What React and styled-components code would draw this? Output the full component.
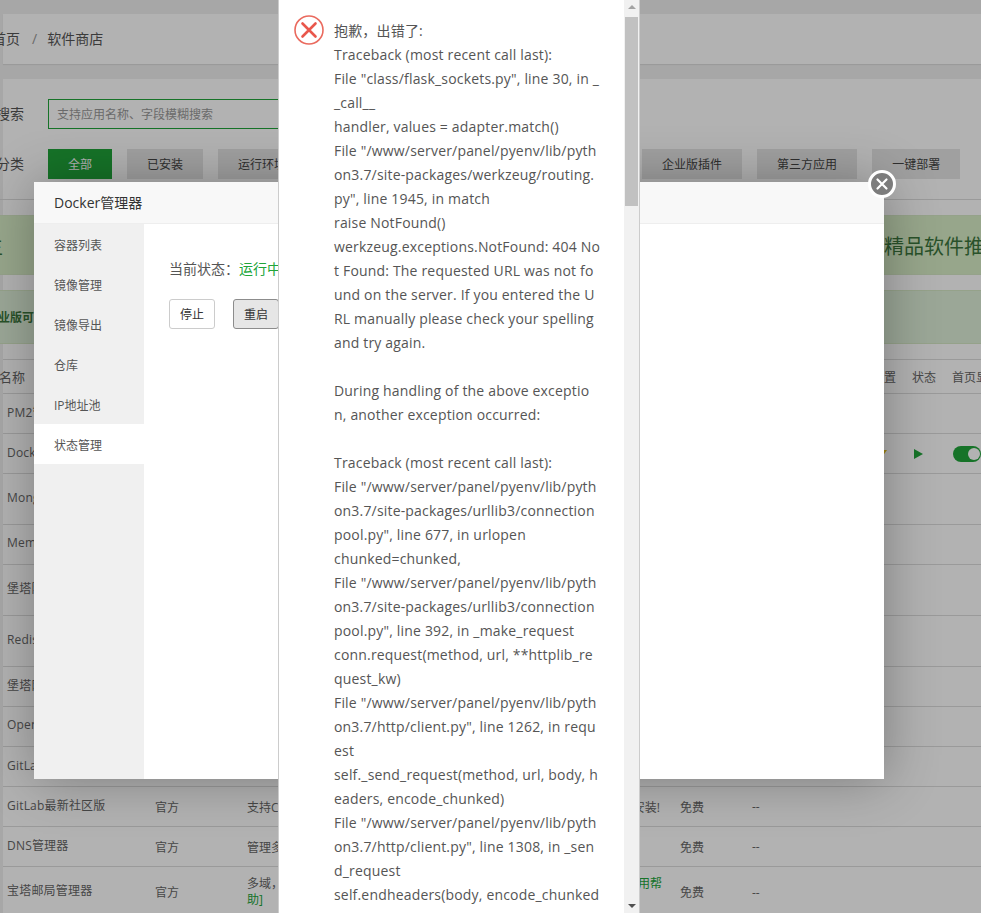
import React from "react";
import styled, { createGlobalStyle } from "styled-components";

const FONT = `"Open Sans", "Noto Sans CJK SC", sans-serif`;

const GlobalStyle = createGlobalStyle`
    html, body {
        margin: 0;
        padding: 0;
        height: 100%;
        overflow: hidden;
    }
    body {
        font-family: ${FONT};
        font-size: 12px;
        color: #666;
        background: #f0f0f0;
    }
    * {
        box-sizing: border-box;
    }
`;

const Viewport = styled.div`
    position: relative;
    width: 981px;
    height: 913px;
    overflow: hidden;
`;

const Page = styled.div`
    display: flex;
    flex-direction: column;
    gap: 15px;
    padding: 14px 0 0 3px;
    width: 1200px;
`;

const Crumbs = styled.div`
    display: flex;
    align-items: center;
    gap: 10px;
    height: 50px;
    padding-bottom: 2px;
    background: #fff;
    font-size: 14px;
    color: #555;
    box-shadow: 0 1px 1px rgba(0, 0, 0, 0.08);

    i {
        font-style: normal;
        color: #999;
    }
`;

const CrumbFirst = styled.span`
    margin: 0 2px 0 -11px;
`;

const Panel = styled.div`
    background: #fff;
    padding-top: 20px;
`;

const FormRow = styled.div`
    display: flex;
    align-items: center;
    height: 30px;
    margin-bottom: 20px;
`;

const RowLabel = styled.div`
    display: flex;
    justify-content: flex-end;
    width: 21px;
    margin-right: 24px;
    padding-bottom: 2px;
    font-size: 14px;
    color: #555;
    white-space: nowrap;
`;

const SearchInput = styled.div`
    width: 500px;
    height: 30px;
    padding-left: 8px;
    line-height: 30px;
    border: 1px solid #20a53a;
    font-size: 12px;
    color: #999;
`;

const Tabs = styled.div`
    display: flex;
    gap: 15px;
`;

const Tab = styled.div`
    padding: 0 20px;
    height: 30px;
    line-height: 32px;
    font-size: 12px;
    background: ${(p) => (p.$active ? "#20a53a" : "#e6e6e6")};
    color: ${(p) => (p.$active ? "#fff" : "#444")};
`;

const Rule = styled.div`
    height: 1px;
    margin-left: -3px;
    background: #ddd;
`;

const Band = styled.div`
    display: flex;
    align-items: center;
    height: ${(p) => p.$h}px;
    margin: ${(p) => p.$mt}px 0 0 -3px;
    background: ${(p) => p.$bg};
    border: 1px solid #d6e9c6;
    border-width: 1px 0;
    color: #3c763d;
    white-space: nowrap;
`;

const BandClip = styled.div`
    display: flex;
    justify-content: flex-end;
    width: ${(p) => p.$w}px;
    font-size: ${(p) => p.$size}px;
    font-weight: ${(p) => p.$weight};
`;

const BandRight = styled.div`
    margin-left: 881px;
    font-size: 20px;
`;

const Table = styled.div`
    margin-top: 15px;
    border-top: 1px solid #ddd;
`;

const Row = styled.div`
    display: grid;
    grid-template-columns: 148px 92px 433px 72px 133px 27px 40px 1fr;
    align-items: center;
    height: ${(p) => p.$h}px;
    padding-left: 4px;
    border-bottom: 1px solid #ddd;
    font-size: 12px;
    color: #666;
    white-space: nowrap;
`;

const Name = styled.div`
    padding-bottom: 4px;
    font-size: 12px;
    letter-spacing: 0.2px;
    color: #666;
`;

const HeaderName = styled.div`
    margin-left: -34px;
    font-size: 13px;
`;

const DescCell = styled.div`
    display: flex;
    justify-content: space-between;
    width: ${(p) => p.$w}px;
`;

const MailDesc = styled.div`
    line-height: 16px;
`;

const Green = styled.span`
    color: #20a53a;
`;

const SetCell = styled.div`
    display: flex;
    justify-content: flex-end;
    margin-right: -11px;
`;

const Play = styled.div`
    width: 0;
    height: 0;
    margin-left: 2px;
    border-style: solid;
    border-width: 5.5px 0 5.5px 9px;
    border-color: transparent transparent transparent #20a53a;
`;

const WarnMark = styled.div`
    width: 0;
    height: 0;
    margin-left: -8px;
    border-style: solid;
    border-width: 7px 5px 0 5px;
    border-color: #e6c020 transparent transparent transparent;
`;

const Toggle = styled.div`
    position: relative;
    width: 28px;
    height: 16px;
    margin-left: 1px;
    border-radius: 8px;
    background: #20a53a;

    &::after {
        content: "";
        position: absolute;
        top: 2px;
        right: 1px;
        width: 12px;
        height: 12px;
        border-radius: 50%;
        background: #fff;
    }
`;

const Shade = styled.div`
    position: absolute;
    inset: 0;
    background: rgba(0, 0, 0, 0.3);
`;

const Dialog = styled.div`
    position: absolute;
    left: 34px;
    top: 182px;
    width: 850px;
    height: 597px;
    display: flex;
    flex-direction: column;
    background: #fff;
    box-shadow: 1px 1px 50px rgba(0, 0, 0, 0.3);
`;

const DialogTitle = styled.div`
    height: 42px;
    padding-left: 20px;
    line-height: 41px;
    font-size: 14px;
    color: #333;
    background: #f8f8f8;
    border-bottom: 1px solid #eee;
`;

const DialogBody = styled.div`
    flex: 1;
    display: flex;
`;

const SideNav = styled.div`
    width: 110px;
    background: #f0f0f0;
`;

const NavItem = styled.div`
    height: 40px;
    padding-left: 20px;
    line-height: 44px;
    font-size: 12px;
    color: #555;
    background: ${(p) => (p.$active ? "#fff" : "transparent")};
`;

const StatusPane = styled.div`
    padding: 34px 25px;
    font-size: 14px;
    color: #555;
`;

const StatusLine = styled.div`
    height: 22px;
    line-height: 22px;
`;

const StatusButtons = styled.div`
    display: flex;
    gap: 18px;
    margin-top: 19px;
`;

const StatusBtn = styled.div`
    width: 46px;
    height: 30px;
    line-height: 30px;
    text-align: center;
    font-size: 12px;
    border-radius: 3px;
    border: 1px solid ${(p) => (p.$pressed ? "#8c8c8c" : "#ccc")};
    background: ${(p) => (p.$pressed ? "#e6e6e6" : "#fff")};
    color: #333;
`;

const CloseBtn = styled.div`
    position: absolute;
    left: 868px;
    top: 170px;
    display: flex;
    align-items: center;
    justify-content: center;
    width: 28px;
    height: 28px;
    border-radius: 50%;
    background: #7c7c7c;
    border: 3px solid #fff;
`;

const Msg = styled.div`
    position: absolute;
    left: 278px;
    top: 0;
    width: 362px;
    height: 913px;
    display: flex;
    background: #fff;
    border: 1px solid #ccc;
    border-width: 0 1px;
`;

const MsgContent = styled.div`
    flex: 1;
    min-width: 0;
    display: flex;
    overflow: hidden;
    padding: 19px 22.5px 0 15px;
    gap: 10px;
`;

const MsgIcon = styled.svg`
    flex: none;
    margin-top: -4px;
`;

const MsgText = styled.div`
    flex: 1;
    min-width: 0;
    font-size: 14px;
    line-height: 24px;
    letter-spacing: 0.18px;
    color: #555;
    word-break: break-all;
    white-space: pre-wrap;
`;

const ScrollTrack = styled.div`
    flex: none;
    display: flex;
    flex-direction: column;
    align-items: stretch;
    width: 15px;
    height: 100%;
    background: #f1f1f1;
`;

const ScrollThumb = styled.div`
    height: 189px;
    margin: 8px 1px 0;
    background: #c1c1c1;
`;

const ArrowUp = styled.div`
    width: 0;
    height: 0;
    margin: 5px auto 0;
    border-style: solid;
    border-width: 0 4px 4px 4px;
    border-color: transparent transparent #a3a3a3 transparent;
`;

const ArrowDown = styled.div`
    width: 0;
    height: 0;
    margin: auto auto 5px;
    border-style: solid;
    border-width: 4px 4px 0 4px;
    border-color: #505050 transparent transparent transparent;
`;

const CATEGORIES = ["全部", "已安装", "运行环境", "系统工具", "宝塔插件", "专业版插件", "企业版插件", "第三方应用", "一键部署"];
const NAV = ["容器列表", "镜像管理", "镜像导出", "仓库", "IP地址池", "状态管理"];

const ROWS = [
    { name: "PM2管理器", h: 40 },
    { name: "Docker管理器", h: 40, docker: true },
    { name: "MongoDB", h: 51 },
    { name: "Memcached", h: 40 },
    { name: "堡塔防火墙", h: 51 },
    { name: "Redis", h: 51 },
    { name: "堡塔网站监控", h: 40 },
    { name: "OpenLiteSpeed", h: 40 },
    { name: "GitLab中文版", h: 40 },
    { name: "GitLab最新社区版", h: 40, by: "官方", desc: "支持CI/CD的代码托管平台", note: "安装!", price: "免费", end: "--" },
    { name: "DNS管理器", h: 40, by: "官方", desc: "管理多个域名", price: "免费", end: "--" },
    { name: "宝塔邮局管理器", h: 51, by: "官方", mail: true, price: "免费", end: "--" },
];

const MESSAGE = `抱歉，出错了:
Traceback (most recent call last):
File "class/flask_sockets.py", line 30, in __call__
handler, values = adapter.match()
File "/www/server/panel/pyenv/lib/python3.7/site-packages/werkzeug/routing.py", line 1945, in match
raise NotFound()
werkzeug.exceptions.NotFound: 404 Not Found: The requested URL was not found on the server. If you entered the URL manually please check your spelling and try again.

During handling of the above exception, another exception occurred:

Traceback (most recent call last):
File "/www/server/panel/pyenv/lib/python3.7/site-packages/urllib3/connectionpool.py", line 677, in urlopen
chunked=chunked,
File "/www/server/panel/pyenv/lib/python3.7/site-packages/urllib3/connectionpool.py", line 392, in _make_request
conn.request(method, url, **httplib_request_kw)
File "/www/server/panel/pyenv/lib/python3.7/http/client.py", line 1262, in request
self._send_request(method, url, body, headers, encode_chunked)
File "/www/server/panel/pyenv/lib/python3.7/http/client.py", line 1308, in _send_request
self.endheaders(body, encode_chunked=encode_chunked)`;

const App = () => {
    return (
        <Viewport>
            <GlobalStyle />
            <Page>
                <Crumbs>
                    <CrumbFirst>首页</CrumbFirst>
                    <i>/</i>
                    <span>软件商店</span>
                </Crumbs>
                <Panel>
                    <FormRow>
                        <RowLabel>应用搜索</RowLabel>
                        <SearchInput>支持应用名称、字段模糊搜索</SearchInput>
                    </FormRow>
                    <FormRow>
                        <RowLabel>应用分类</RowLabel>
                        <Tabs>
                            {CATEGORIES.map((c, i) => (
                                <Tab key={c} $active={i === 0}>{c}</Tab>
                            ))}
                        </Tabs>
                    </FormRow>
                    <Rule />
                    <Band $h={60} $mt={15} $bg="#d9eec8">
                        <BandClip $w={3} $size={20}>主</BandClip>
                        <BandRight>精品软件推荐</BandRight>
                    </Band>
                    <Band $h={54} $mt={15} $bg="#dff0d8">
                        <BandClip $w={34} $size={12} $weight={700}>专业版可</BandClip>
                    </Band>
                    <Table>
                        <Row $h={34}>
                            <HeaderName>软件名称</HeaderName>
                            <div />
                            <div />
                            <div />
                            <SetCell>设置</SetCell>
                            <div />
                            <div>状态</div>
                            <div>首页显示</div>
                        </Row>
                        {ROWS.map((r) => (
                            <Row key={r.name} $h={r.h}>
                                <Name>{r.name}</Name>
                                <div>{r.by}</div>
                                {r.mail ? (
                                    <MailDesc>
                                        <DescCell $w={415}>
                                            <span>多域，</span>
                                            <Green>用帮</Green>
                                        </DescCell>
                                        <Green>助]</Green>
                                    </MailDesc>
                                ) : (
                                    <DescCell $w={413}>
                                        <span>{r.desc}</span>
                                        <span>{r.note}</span>
                                    </DescCell>
                                )}
                                <div>{r.price}</div>
                                <div>{r.end}</div>
                                {r.docker ? <WarnMark /> : <div />}
                                {r.docker ? <Play /> : <div />}
                                {r.docker ? <Toggle /> : <div />}
                            </Row>
                        ))}
                    </Table>
                </Panel>
            </Page>
            <Shade />
            <Dialog>
                <DialogTitle>Docker管理器</DialogTitle>
                <DialogBody>
                    <SideNav>
                        {NAV.map((n, i) => (
                            <NavItem key={n} $active={i === 5}>{n}</NavItem>
                        ))}
                    </SideNav>
                    <StatusPane>
                        <StatusLine>当前状态：<Green>运行中</Green></StatusLine>
                        <StatusButtons>
                            <StatusBtn>停止</StatusBtn>
                            <StatusBtn $pressed>重启</StatusBtn>
                        </StatusButtons>
                    </StatusPane>
                </DialogBody>
            </Dialog>
            <CloseBtn>
                <svg width="14" height="14" viewBox="0 0 14 14">
                    <path d="M2.5 2.5l9 9M11.5 2.5l-9 9" stroke="#fff" strokeWidth="2.2" strokeLinecap="round" />
                </svg>
            </CloseBtn>
            <Msg>
                <MsgContent>
                    <MsgIcon width="30" height="30" viewBox="0 0 30 30">
                        <circle cx="15" cy="15" r="14" fill="none" stroke="#ea6a5e" strokeWidth="1.6" />
                        <path d="M8.5 8.5l13 13M21.5 8.5l-13 13" stroke="#e9574c" strokeWidth="2.6" strokeLinecap="round" />
                    </MsgIcon>
                    <MsgText>{MESSAGE}</MsgText>
                </MsgContent>
                <ScrollTrack>
                    <ArrowUp />
                    <ScrollThumb />
                    <ArrowDown />
                </ScrollTrack>
            </Msg>
        </Viewport>
    );
};

export default App;
